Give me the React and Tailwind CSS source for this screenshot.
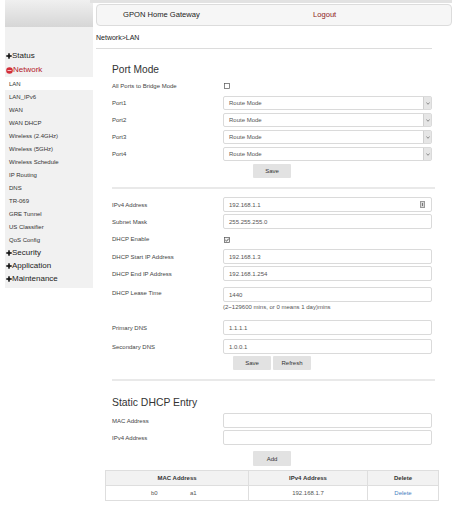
import React from "react";

const subItems = [
  "LAN",
  "LAN_IPv6",
  "WAN",
  "WAN DHCP",
  "Wireless (2.4GHz)",
  "Wireless (5GHz)",
  "Wireless Schedule",
  "IP Routing",
  "DNS",
  "TR-069",
  "GRE Tunnel",
  "US Classifier",
  "QoS Config",
];

function PlusIcon() {
  return (
    <svg width="6" height="6" viewBox="0 0 6 6" className="shrink-0">
      <rect x="2.2" y="0.3" width="1.6" height="5.4" fill="#111" />
      <rect x="0.3" y="2.2" width="5.4" height="1.6" fill="#111" />
    </svg>
  );
}

function MinusIcon() {
  return (
    <svg width="7" height="7" viewBox="0 0 7 7" className="shrink-0">
      <circle cx="3.5" cy="3.5" r="3.3" fill="#d32f3a" />
      <rect x="1.5" y="3" width="4" height="1" fill="#f6c0c4" />
    </svg>
  );
}

function TopItem({ label, open }) {
  return (
    <div className="h-[13px] flex items-center pl-[1px] gap-[0px]">
      {open ? <MinusIcon /> : <PlusIcon />}
      <span
        className={`text-[8px] leading-none ${open ? "text-[#b3202a]" : "text-[#222]"}`}
      >
        {label}
      </span>
    </div>
  );
}

function Sidebar() {
  return (
    <div className="ml-[5px] w-[88px] bg-[#f1f1f1] flex flex-col pb-[3px] self-start">
      <div className="h-[27px] bg-gradient-to-b from-[#f0f0f0] to-[#d6d6d6]" />
      <div className="h-[22px]" />
      <div className="h-[14px] flex items-center pl-[1px]">
        <PlusIcon />
        <span className="text-[8px] leading-none text-[#222]">Status</span>
      </div>
      <div className="h-[14px] flex items-center pl-[1px]">
        <MinusIcon />
        <span className="text-[8px] leading-none text-[#b3202a]">Network</span>
      </div>
      {subItems.map((s, i) => (
        <div
          key={s}
          className={`h-[13px] flex items-center pl-[4px] text-[6px] leading-none text-[#333] ${
            i === 0 ? "bg-white text-[#222]" : ""
          }`}
        >
          {s}
        </div>
      ))}
      <TopItem label="Security" />
      <TopItem label="Application" />
      <TopItem label="Maintenance" />
    </div>
  );
}

function Input({ value, icon }) {
  return (
    <div className="h-full border border-[#dadada] rounded-[2px] bg-white flex items-center pl-[5px] pr-[6px] text-[6px] text-[#555] leading-none">
      <span className="flex-1">{value}</span>
      {icon && (
        <svg width="5" height="7" viewBox="0 0 5 7">
          <rect x="0" y="0" width="5" height="7" fill="#9a9a9a" />
          <rect x="1" y="1" width="3" height="5" fill="#d8d8d8" />
          <rect x="2" y="2" width="1" height="3" fill="#777" />
        </svg>
      )}
    </div>
  );
}

function Select() {
  return (
    <div className="h-full border border-[#dadada] rounded-[2px] bg-white flex items-center text-[6px] text-[#555] leading-none">
      <span className="flex-1 pl-[5px]">Route Mode</span>
      <div className="w-[8px] h-full bg-[#e6e6e6] border-l border-[#d0d0d0] flex items-center justify-center">
        <svg width="4" height="3" viewBox="0 0 4 3">
          <path d="M0.5 0.5 L2 2.3 L3.5 0.5" stroke="#777" strokeWidth="0.8" fill="none" />
        </svg>
      </div>
    </div>
  );
}

function Checkbox({ checked }) {
  return (
    <svg width="6" height="6" viewBox="0 0 6 6" className="ml-[1px]">
      <rect x="0.5" y="0.5" width="5" height="5" fill={checked ? "#f0f0f0" : "#fff"} stroke="#555" strokeWidth="0.7" />
      {checked && <path d="M1.3 3 L2.5 4.2 L4.8 1.6" stroke="#333" strokeWidth="0.8" fill="none" />}
    </svg>
  );
}

function Row({ label, children, h = "h-[15px]", labelTop = false }) {
  return (
    <div className={`flex ${labelTop ? "items-start" : "items-center"} ${h}`}>
      <div className="w-[111px] text-[6px] leading-none text-[#444]">{label}</div>
      <div className="w-[209px] h-full flex flex-col justify-center">{children}</div>
    </div>
  );
}

function Button({ children }) {
  return (
    <div className="w-[38px] h-[14px] bg-[#e2e2e2] rounded-[1px] flex items-center justify-center text-[6px] leading-none text-[#333]">
      {children}
    </div>
  );
}

function Sep() {
  return <div className="h-[2px] w-[323px] bg-[#e9e9e9]" />;
}

export default function App() {
  return (
    <div className="w-[474px] h-[518px] bg-white flex font-['Liberation_Sans',Arial,sans-serif] overflow-hidden">
      <Sidebar />
      <div className="ml-[3px] w-[356px] flex flex-col">
        <div className="h-[3px] bg-[#e2e2e2] -ml-[6px]" />
        <div className="mt-[1px] h-[22px] border border-[#dcdcdc] rounded-[4px] bg-[#f6f6f6] flex items-center text-[7.6px] leading-none">
          <div className="w-[216px] pl-[26px] text-[#222]">GPON Home Gateway</div>
          <div className="text-[#8e2424]">Logout</div>
        </div>
        <div className="h-[22px] flex items-center text-[7px] leading-none text-[#222]">Network&gt;LAN</div>
        <div className="h-[1px] w-[336px] bg-[#dcdcdc]" />

        <div className="pl-[16px] flex flex-col">
          <div className="mt-[14px] h-[14px] flex items-center text-[10.2px] leading-none text-[#333]">Port Mode</div>
          <div className="mt-[2px] flex flex-col gap-[3px]">
            <Row label="All Ports to Bridge Mode" h="h-[14px]">
              <Checkbox />
            </Row>
            {["Port1", "Port2", "Port3", "Port4"].map((p) => (
              <Row key={p} label={p} h="h-[14px]">
                <Select />
              </Row>
            ))}
          </div>
          <div className="mt-[3px] w-[320px] flex justify-center">
            <Button>Save</Button>
          </div>
          <div className="mt-[9px]">
            <Sep />
          </div>

          <div className="mt-[8px] flex flex-col gap-[2px]">
            <Row label="IPv4 Address">
              <Input value="192.168.1.1" icon />
            </Row>
            <Row label="Subnet Mask">
              <Input value="255.255.255.0" />
            </Row>
            <Row label="DHCP Enable" h="h-[16px]">
              <div className="pt-[2px]">
                <Checkbox checked />
              </div>
            </Row>
            <Row label="DHCP Start IP Address">
              <Input value="192.168.1.3" />
            </Row>
            <Row label="DHCP End IP Address">
              <Input value="192.168.1.254" />
            </Row>
          </div>
          <div className="mt-[6px] flex items-start">
            <div className="w-[111px] pt-[3px] text-[6px] leading-none text-[#444]">DHCP Lease Time</div>
            <div className="w-[209px] flex flex-col">
              <div className="h-[15px]">
                <Input value="1440" />
              </div>
              <div className="mt-[2px] text-[6px] leading-none text-[#555]">(2~129600 mins, or 0 means 1 day)mins</div>
            </div>
          </div>
          <div className="mt-[10px] flex flex-col gap-[4px]">
            <Row label="Primary DNS">
              <Input value="1.1.1.1" />
            </Row>
            <Row label="Secondary DNS">
              <Input value="1.0.0.1" />
            </Row>
          </div>
          <div className="mt-[2px] w-[320px] flex justify-center gap-[2px]">
            <Button>Save</Button>
            <Button>Refresh</Button>
          </div>
          <div className="mt-[9px]">
            <Sep />
          </div>

          <div className="mt-[15px] h-[14px] flex items-center text-[10.4px] leading-none text-[#333]">Static DHCP Entry</div>
          <div className="mt-[3px] flex flex-col gap-[2px]">
            <Row label="MAC Address">
              <Input value="" />
            </Row>
            <Row label="IPv4 Address">
              <Input value="" />
            </Row>
          </div>
          <div className="mt-[6px] w-[320px] flex justify-center">
            <div className="w-[38px] h-[15px] bg-[#e2e2e2] rounded-[1px] flex items-center justify-center text-[6px] leading-none text-[#333]">Add</div>
          </div>
        </div>

        <div className="mt-[4px] ml-[9px]">
          <table className="border-collapse text-[6px] leading-none">
            <thead>
              <tr className="h-[15px] bg-[#f2f2f2]">
                <th className="w-[143px] border border-[#dedede] font-bold text-[#333]">MAC Address</th>
                <th className="w-[119px] border border-[#dedede] font-bold text-[#333]">IPv4 Address</th>
                <th className="w-[71px] border border-[#dedede] font-bold text-[#333]">Delete</th>
              </tr>
            </thead>
            <tbody>
              <tr className="h-[15px] bg-white">
                <td className="border border-[#dedede] text-[#555]">
                  <div className="flex pl-[45px]">
                    <span className="w-[39px]">b0</span>
                    <span>a1</span>
                  </div>
                </td>
                <td className="border border-[#dedede] text-center text-[#555]">192.168.1.7</td>
                <td className="border border-[#dedede] text-center text-[#4a7fc1]">Delete</td>
              </tr>
            </tbody>
          </table>
        </div>
      </div>
    </div>
  );
}
